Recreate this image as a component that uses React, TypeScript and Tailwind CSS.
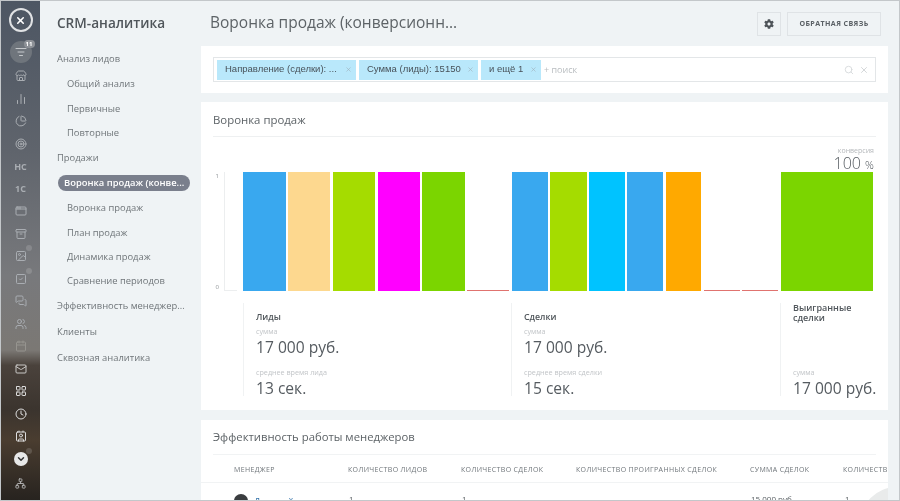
import { X, Search, Store, ChartNoAxesColumn, ChartPie, Target, AppWindow, Archive, Image, SquareCheck, MessagesSquare, Users, Calendar, Mail, LayoutGrid, Clock, Contact, ChevronDown, Network, ListFilter } from "lucide-react";
import { FaCog } from "react-icons/fa";

const font = { fontFamily: '"Open Sans", sans-serif' };

function SideItem({ children, dot }: { children: React.ReactNode; dot?: boolean }) {
  return (
    <div className="relative h-[22.5px] w-full flex items-center justify-center text-[#a9adb2]">
      {children}
      {dot && <span className="absolute left-[25px] top-0 w-[6px] h-[6px] rounded-full bg-white/15" />}
    </div>
  );
}

function Sidebar() {
  const ic = { size: 12, strokeWidth: 2 };
  return (
    <div className="w-[39px] shrink-0 h-full flex flex-col items-center bg-[linear-gradient(180deg,#4d5663_0%,#5f646c_30%,#78797c_55%,#7b7874_70%,#4a423c_73%,#3b342e_82%,#4a3d30_88%,#27231f_100%)]">
      <div className="mt-[7px] w-[24px] h-[24px] rounded-full border-2 border-[#e0e2e4] flex items-center justify-center">
        <X size={11} strokeWidth={3.5} className="text-white" />
      </div>
      <div className="relative mt-[9px] w-[22px] h-[22px] rounded-full bg-[#6f757c] flex items-center justify-center">
        <ListFilter size={12} className="text-[#c5c8cb]" />
        <span className="absolute left-[14px] top-[-1px] w-[11px] h-[8px] rounded-full bg-[#8d9197] text-[6px] leading-[8px] text-center text-white font-bold">11</span>
      </div>
      <div className="h-[2px]" />
      <SideItem><Store {...ic} /></SideItem>
      <SideItem><ChartNoAxesColumn {...ic} /></SideItem>
      <SideItem><ChartPie {...ic} /></SideItem>
      <SideItem><Target {...ic} /></SideItem>
      <SideItem><span className="text-[9px] font-bold">НС</span></SideItem>
      <SideItem><span className="text-[9px] font-bold">1С</span></SideItem>
      <SideItem><AppWindow {...ic} /></SideItem>
      <SideItem><Archive {...ic} /></SideItem>
      <SideItem dot><Image {...ic} /></SideItem>
      <SideItem dot><SquareCheck {...ic} /></SideItem>
      <SideItem><MessagesSquare {...ic} /></SideItem>
      <SideItem><Users {...ic} /></SideItem>
      <SideItem><Calendar {...ic} className="text-[#96948f]" /></SideItem>
      <SideItem><Mail {...ic} className="text-[#c9c8c6]" /></SideItem>
      <SideItem><LayoutGrid {...ic} className="text-[#dcdcdc]" /></SideItem>
      <SideItem><Clock {...ic} className="text-[#dcdcdc]" /></SideItem>
      <SideItem><Contact {...ic} className="text-[#dcdcdc]" /></SideItem>
      <SideItem dot>
        <span className="w-[14px] h-[14px] rounded-full bg-[#e8e8e8] flex items-center justify-center">
          <ChevronDown size={10} strokeWidth={3.5} className="text-[#333]" />
        </span>
      </SideItem>
      <div className="mt-[8px] text-[#b5b5b5]"><Network size={11} strokeWidth={2} /></div>
    </div>
  );
}

function MenuTop({ children, h = "h-[26px]" }: { children: React.ReactNode; h?: string }) {
  return <div className={`${h} flex items-center pl-[17px] text-[9.4px] text-[#6f7579] whitespace-nowrap`}>{children}</div>;
}
function MenuSub({ children }: { children: React.ReactNode }) {
  return <div className="h-[24.4px] flex items-center pl-[27px] text-[9.4px] text-[#6f7579] whitespace-nowrap">{children}</div>;
}

function Menu() {
  return (
    <div className="w-[161px] shrink-0 h-full bg-[#eff3f5]">
      <div className="pl-[17px] pt-[12px] h-[45px] text-[13.6px] font-semibold text-[#50565b]">CRM-аналитика</div>
      <MenuTop>Анализ лидов</MenuTop>
      <MenuSub>Общий анализ</MenuSub>
      <MenuSub>Первичные</MenuSub>
      <MenuSub>Повторные</MenuSub>
      <MenuTop h="h-[25px]">Продажи</MenuTop>
      <div className="h-[26px] flex items-center pl-[18px]">
        <div className="w-[132px] h-[16px] rounded-full bg-[#7a7f8c] text-white font-semibold text-[9.4px] leading-[16px] pl-[6px] whitespace-nowrap">Воронка продаж (конве...</div>
      </div>
      <MenuSub>Воронка продаж</MenuSub>
      <MenuSub>План продаж</MenuSub>
      <MenuSub>Динамика продаж</MenuSub>
      <MenuSub>Сравнение периодов</MenuSub>
      <MenuTop h="h-[25px]">Эффективность менеджер...</MenuTop>
      <MenuTop>Клиенты</MenuTop>
      <MenuTop>Сквозная аналитика</MenuTop>
    </div>
  );
}

function Tag({ w, children, gap }: { w: string; children: React.ReactNode; gap?: string }) {
  return (
    <div className={`${w} h-[20px] bg-[#b9e8fb] flex items-center justify-between pl-[8px] pr-[4px] text-[9.5px] text-[#48525a] whitespace-nowrap ${gap ?? ""}`} style={{ fontFamily: '"Liberation Sans", sans-serif' }}>
      <span>{children}</span>
      <X size={7} strokeWidth={2} className="text-[#9cb0ba]" />
    </div>
  );
}

function Bar({ w, color }: { w: string; color: string }) {
  return <div className={`${w} h-full ${color}`} />;
}
function Empty({ w }: { w: string }) {
  return <div className={`${w} h-full flex flex-col justify-end`}><div className="h-[1px] bg-[#e0736f]" /></div>;
}

function Stat({ label, value, className }: { label: string; value: string; className?: string }) {
  return (
    <div className={className}>
      <div className="text-[7.2px] leading-[10px] text-[#c2c5c8] whitespace-nowrap">{label}</div>
      <div className="text-[15.6px] leading-[22px] text-[#555b60] whitespace-nowrap">{value}</div>
    </div>
  );
}

const thCls = "text-[7px] tracking-[0.35px] text-[#6f757a] whitespace-nowrap shrink-0";

export default function App() {
  return (
    <div className="relative w-[900px] h-[501px] overflow-hidden border border-[#c3c7ca] flex bg-[#eff3f5] blur-[0.4px]" style={font}>
      <Sidebar />
      <Menu />
      <div className="w-[699px] shrink-0 h-full flex flex-col">
        <div className="h-[45px] shrink-0 flex items-center pl-[9px] pr-[19px]">
          <div className="text-[15.5px] text-[#5d6367] whitespace-nowrap flex-1 -mt-[1px]">Воронка продаж (конверсионн...</div>
          <div className="w-[24px] h-[24px] border border-[#dfe3e6] flex items-center justify-center mr-[6px]">
            <FaCog size={10} className="text-[#4e5459]" />
          </div>
          <div className="w-[94px] h-[24px] border border-[#dfe3e6] flex items-center justify-center text-[7.1px] font-bold tracking-[0.4px] text-[#5a6065] whitespace-nowrap">ОБРАТНАЯ СВЯЗЬ</div>
        </div>
        <div className="w-[687px] h-[47px] shrink-0 bg-white px-[12px] py-[11px]">
          <div className="h-[25px] border border-[#e3e6e8] flex items-center pl-[3px] pr-[6px]">
            <Tag w="w-[139px]">Направление (сделки): ...</Tag>
            <Tag w="w-[119px]" gap="ml-[3px]">Сумма (лиды): 15150</Tag>
            <Tag w="w-[60px]" gap="ml-[3px]">и ещё 1</Tag>
            <span className="ml-[3px] text-[9px] text-[#b9bdc0] flex-1">+ поиск</span>
            <Search size={10} className="text-[#d3d6d8] mr-[5px]" />
            <X size={10} className="text-[#cdd0d2]" />
          </div>
        </div>
        <div className="w-[687px] h-[308px] shrink-0 mt-[9px] bg-white">
          <div className="h-[35px] mx-[12px] border-b border-[#eef0f1] flex items-center pt-[1px] text-[11.4px] text-[#5d6367]">
            <span>Воронка продаж</span>
          </div>
          <div className="h-[35px] relative">
            <div className="absolute right-[14px] top-[9px] text-right">
              <div className="text-[7px] leading-[9px] text-[#b5b8bb]">конверсия</div>
              <div className="text-[16px] leading-[17px] font-light text-[#555b60]">100 <span className="text-[11px]">%</span></div>
            </div>
          </div>
          <div className="h-[119px] flex">
            <div className="w-[17px] ml-[6px] flex flex-col justify-between text-[6px] text-[#8f9497] text-right pr-[5px]">
              <span className="leading-[6px] mt-[1px]">1</span>
              <span className="leading-[6px] mb-[1px]">0</span>
            </div>
            <div className="w-[12.6px] h-full border-l border-b border-[#eceeef]" />
            <div className="ml-[6.4px] h-full flex gap-[2.5px]">
              <Bar w="w-[42.6px]" color="bg-[#39a8ef]" />
              <Bar w="w-[42px]" color="bg-[#fdd88f]" />
              <Bar w="w-[42.6px]" color="bg-[#a5dc00]" />
              <Bar w="w-[42px]" color="bg-[#ff00ff]" />
              <Bar w="w-[42.6px]" color="bg-[#7bd500]" />
              <Empty w="w-[42px]" />
              <Bar w="w-[36px]" color="bg-[#39a8ef]" />
              <Bar w="w-[36.4px]" color="bg-[#a5dc00]" />
              <Bar w="w-[35.6px]" color="bg-[#00c3ff]" />
              <Bar w="w-[36px]" color="bg-[#39a8ef]" />
              <Bar w="w-[35.6px]" color="bg-[#ffa900]" />
              <Empty w="w-[36px]" />
              <Empty w="w-[36px]" />
              <Bar w="w-[92px]" color="bg-[#7bd500]" />
            </div>
          </div>
          <div className="flex mt-[12px] ml-[42px] h-[93px]">
            <div className="w-[268px] shrink-0 border-l border-[#f0f2f3] pl-[12px] pt-[7px]">
              <div className="text-[8.8px] font-semibold leading-[14px] text-[#50565b]">Лиды</div>
              <Stat className="mt-[2px]" label="сумма" value="17 000 руб." />
              <Stat className="mt-[9px]" label="среднее время лида" value="13 сек." />
            </div>
            <div className="w-[269px] shrink-0 border-l border-[#f0f2f3] pl-[12px] pt-[7px]">
              <div className="text-[8.8px] font-semibold leading-[14px] text-[#50565b]">Сделки</div>
              <Stat className="mt-[2px]" label="сумма" value="17 000 руб." />
              <Stat className="mt-[9px]" label="среднее время сделки" value="15 сек." />
            </div>
            <div className="w-[100px] shrink-0 border-l border-[#f0f2f3] pl-[12px]">
              <div className="text-[9px] font-semibold leading-[10px] text-[#50565b]">Выигранные сделки</div>
              <Stat className="mt-[44px]" label="сумма" value="17 000 руб." />
            </div>
          </div>
        </div>
        <div className="w-[687px] flex-1 mt-[10px] bg-white overflow-hidden">
          <div className="h-[35px] mx-[12px] border-b border-[#f1f3f4] flex items-center text-[11.3px] text-[#5d6367]">Эффективность работы менеджеров</div>
          <div className="h-[28px] border-b border-[#f1f3f4] flex items-center pl-[33px] pt-[3px] overflow-hidden">
            <span className={`${thCls} w-[114px]`}>МЕНЕДЖЕР</span>
            <span className={`${thCls} w-[113px]`}>КОЛИЧЕСТВО ЛИДОВ</span>
            <span className={`${thCls} w-[115px]`}>КОЛИЧЕСТВО СДЕЛОК</span>
            <span className={`${thCls} w-[174px]`}>КОЛИЧЕСТВО ПРОИГРАННЫХ СДЕЛОК</span>
            <span className={`${thCls} w-[93px]`}>СУММА СДЕЛОК</span>
            <span className={`${thCls} w-[60px]`}>КОЛИЧЕСТВО</span>
          </div>
          <div className="flex items-start pl-[33px] pt-[11px] text-[8px] leading-[10px] text-[#5d6367] overflow-hidden">
            <div className="w-[114px] shrink-0 flex items-start">
              <div className="w-[14px] h-[14px] rounded-full bg-[#3a3d40] mr-[6px]" />
              <span className="text-[9px] mt-[3px] text-[#2f6fa8]">Дмитрий</span>
            </div>
            <span className="w-[113px] shrink-0 pl-[1px]">1</span>
            <span className="w-[115px] shrink-0 pl-[1px]">1</span>
            <span className="w-[174px] shrink-0" />
            <span className="w-[93px] shrink-0 pl-[1px] whitespace-nowrap">15 000 руб.</span>
            <span className="w-[60px] shrink-0 pl-[2px]">1</span>
          </div>
        </div>
      </div>
      <div className="absolute left-[859px] top-[486px] w-[28px] h-[14px] overflow-hidden">
        <div className="w-[74px] h-[74px] rounded-full bg-[#e9ebeb]" />
      </div>
    </div>
  );
}
